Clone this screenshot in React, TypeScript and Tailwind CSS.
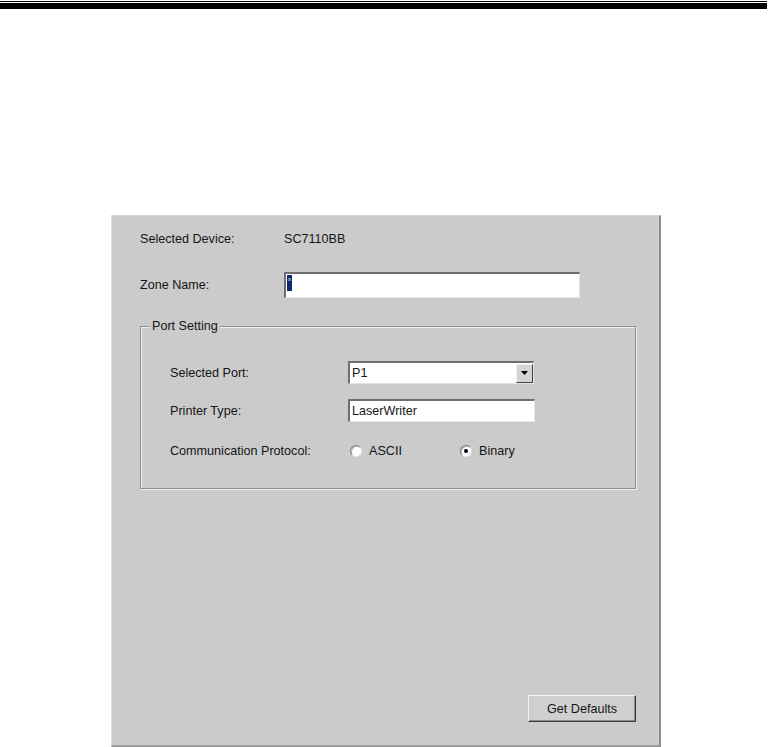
import React from "react";

const font = { fontFamily: '"Liberation Sans", Arial, sans-serif' };

function Sunken({ className, children }: { className: string; children?: React.ReactNode }) {
    return (
        <div className={`border-t-2 border-l-2 border-t-[#6e6e6e] border-l-[#6e6e6e] border-b border-r border-b-[#e4e4e4] border-r-[#e4e4e4] bg-white ${className}`}>
            {children}
        </div>
    );
}

function Radio({ checked, label }: { checked?: boolean; label: string }) {
    return (
        <div className="flex items-center gap-[7px]">
            <div className="w-[12px] h-[12px] rounded-full bg-white border border-t-[#7a7a7a] border-l-[#7a7a7a] border-b-[#e6e6e6] border-r-[#e6e6e6] shadow-[inset_1px_1px_0_#bdbdbd] flex items-center justify-center">
                {checked && <div className="w-[4px] h-[4px] rounded-full bg-black" />}
            </div>
            <span>{label}</span>
        </div>
    );
}

export default function App() {
    return (
        <div className="min-h-[747px] bg-white text-[12.6px] text-[#151515] leading-[14px]" style={font}>
            {/* header rule */}
            <div className="w-[767px] pt-[1px]">
                <div className="h-[1px] bg-black" />
                <div className="h-[6px] mt-[1px] bg-black" />
            </div>

            <div className="ml-[111px] mt-[206px] w-[550px] h-[532px] bg-[#cbcbcb] border-l border-t border-l-[#dedede] border-t-[#d6d6d6] border-r-2 border-b-2 border-r-[#8c8c8c] border-b-[#9a9a9a] flex flex-col pl-[28px] pt-[16px] pb-[23px] pr-[23px]">
                <div className="flex items-center h-[14px]">
                    <span className="w-[144px]">Selected Device:</span>
                    <span>SC7110BB</span>
                </div>

                <div className="flex items-center mt-[26px]">
                    <span className="w-[144px]">Zone Name:</span>
                    <Sunken className="w-[296px] h-[26px] pl-[1px] pt-[1px]">
                        <div className="w-[5px] h-[16px] bg-[#0c2a70] text-white text-[6px] leading-[8px] text-center">x</div>
                    </Sunken>
                </div>

                {/* group box */}
                <div className="relative mt-[28px] w-[496px] h-[163px] border border-[#8e8e8e] shadow-[1px_1px_0_#efefef,inset_1px_1px_0_#efefef] pl-[29px] pt-[34px]">
                    <span className="absolute -top-[8px] left-[9px] px-[2px] bg-[#cbcbcb]">Port Setting</span>

                    <div className="flex items-center">
                        <span className="w-[178px]">Selected Port:</span>
                        <Sunken className="w-[186px] h-[23px] flex items-center justify-between">
                            <span className="pl-[2px]">P1</span>
                            <div className="w-[17px] h-[19px] bg-[#d4d4d4] border border-t-[#f0f0f0] border-l-[#f0f0f0] border-b-[#404040] border-r-[#404040] flex items-center justify-center">
                                <svg width="7" height="4" viewBox="0 0 7 4"><path d="M0 0h7L3.5 4z" fill="#000" /></svg>
                            </div>
                        </Sunken>
                    </div>

                    <div className="flex items-center mt-[15px]">
                        <span className="w-[178px]">Printer Type:</span>
                        <Sunken className="w-[187px] h-[23px] flex items-center">
                            <span className="pl-[2px]">LaserWriter</span>
                        </Sunken>
                    </div>

                    <div className="flex items-center mt-[22px]">
                        <span className="w-[180px]">Communication Protocol:</span>
                        <div className="w-[110px]">
                            <Radio label="ASCII" />
                        </div>
                        <Radio checked label="Binary" />
                    </div>
                </div>

                <div className="flex-1" />

                <div className="flex justify-end">
                    <button className="w-[108px] h-[27px] bg-[#cfcfcf] border border-t-[#f2f2f2] border-l-[#f2f2f2] border-b-[#3a3a3a] border-r-[#3a3a3a] shadow-[inset_-1px_-1px_0_#8a8a8a] text-[12.6px]">
                        Get Defaults
                    </button>
                </div>
            </div>
        </div>
    );
}
